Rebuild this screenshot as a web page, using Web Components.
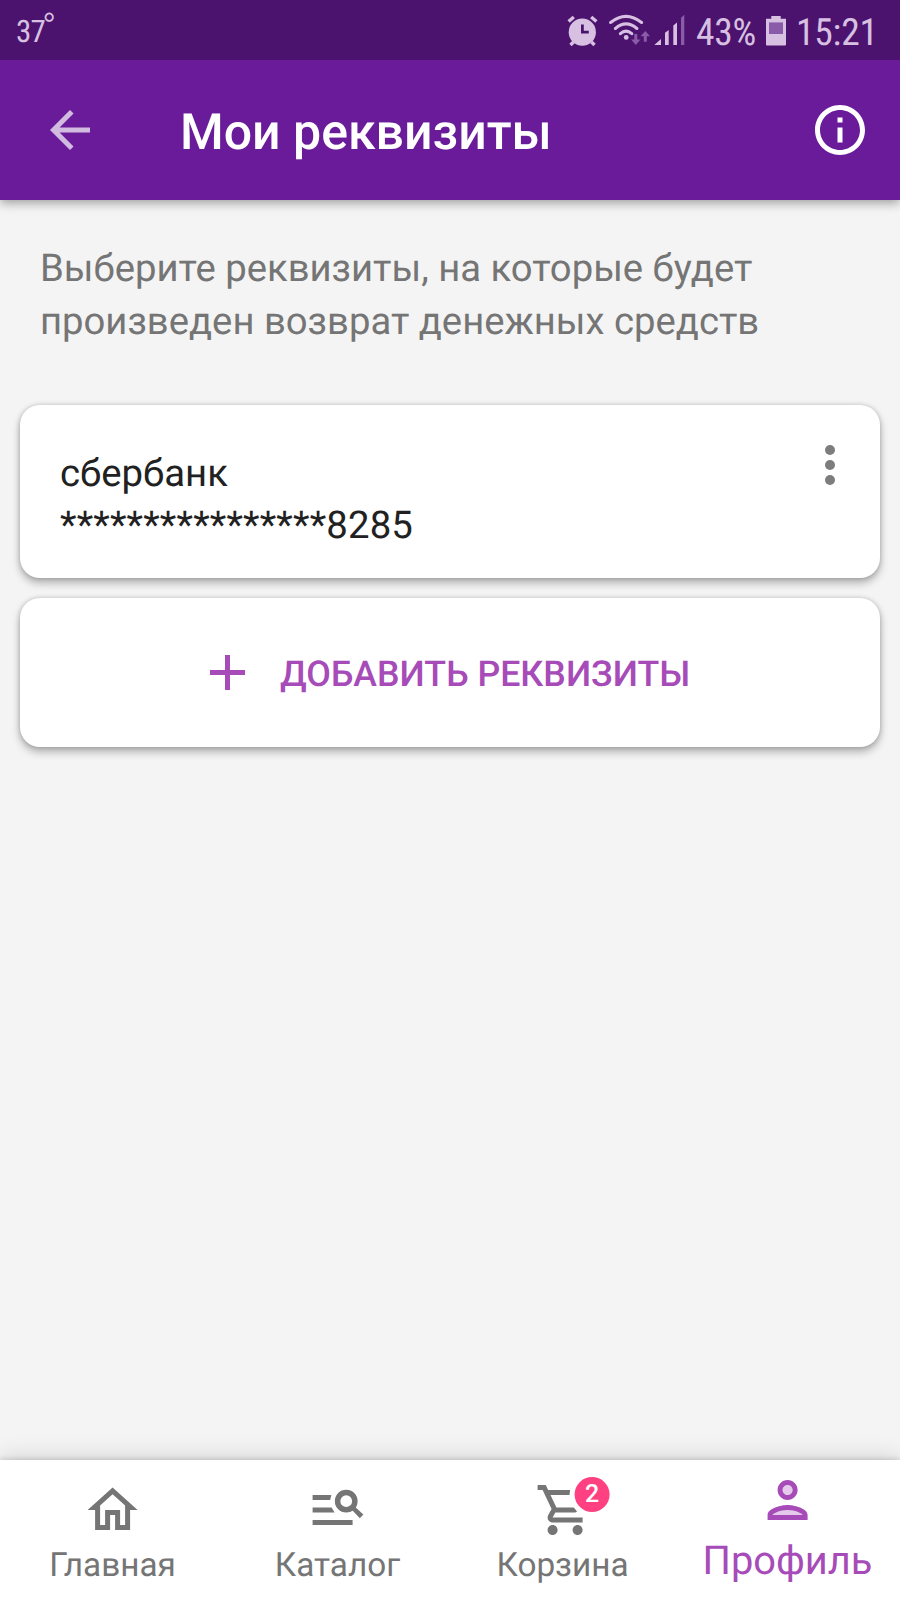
<!DOCTYPE html>
<html lang="ru">
<head>
<meta charset="utf-8">
<title>Мои реквизиты</title>
<style>
  html, body { margin: 0; height: 100%; }
  body { font-family: Roboto, "Noto Sans", sans-serif; background: #f4f4f4; overflow: hidden; text-rendering: geometricPrecision; }
</style>
</head>
<body>
<app-screen>
  <status-bar slot="top" temp="37" battery="43%" time="15:21"></status-bar>
  <app-bar slot="top">Мои реквизиты</app-bar>
  <hint-text>Выберите реквизиты, на которые будет произведен возврат денежных средств</hint-text>
  <app-card>
    <account-row name="сбербанк" number="****************8285"></account-row>
  </app-card>
  <app-card>
    <add-button>ДОБАВИТЬ РЕКВИЗИТЫ</add-button>
  </app-card>
  <nav-bar slot="bottom">
    <nav-item icon="home">Главная</nav-item>
    <nav-item icon="catalog">Каталог</nav-item>
    <nav-item icon="cart" badge="2">Корзина</nav-item>
    <nav-item icon="person" active>Профиль</nav-item>
  </nav-bar>
</app-screen>

<script>
const icons = {
  back: '<path d="M20 11H7.83l5.59-5.59L12 4l-8 8 8 8 1.41-1.41L7.83 13H20z"/>',
  info: '<path d="M11 7h2v2h-2zm0 4h2v6h-2zm1-9C6.48 2 2 6.48 2 12s4.48 10 10 10 10-4.48 10-10S17.52 2 12 2zm0 18c-4.41 0-8-3.59-8-8s3.59-8 8-8 8 3.59 8 8-3.59 8-8 8z"/>',
  more: '<circle cx="12" cy="6" r="2"/><circle cx="12" cy="12" r="2"/><circle cx="12" cy="18" r="2"/>',
  plus: '<path d="M19 13h-6v6h-2v-6H5v-2h6V5h2v6h6z"/>',
  home: '<path d="M12 5.69l5 4.5V18h-2v-6H9v6H7v-7.81l5-4.5M12 3L2 12h3v8h6v-6h2v6h6v-8h3L12 3z"/>',
  catalog: '<path d="M2 6h7.5l-.5 2H2zM2 11h7.6l1.2 2H2zM2 16h16v2H2z"/><circle cx="15.45" cy="8.45" r="3.45" fill="none" stroke="currentColor" stroke-width="2.2"/><path d="M17.4 11.6l1.2-1.2 3.7 3.4-1.4 1.5z"/>',
  cart: '<path transform="translate(1 0)" d="M15.55 13c.75 0 1.41-.41 1.75-1.03l3.58-6.49C21.25 4.82 20.76 4 20.01 4H5.21l-.94-2H1v2h2l3.6 7.59-1.35 2.44C4.52 15.37 5.48 17 7 17h12v-2H7l1.1-2h7.45zM6.16 6h12.15l-2.76 5H8.53L6.16 6zM7 18c-1.1 0-1.99.9-1.99 2S5.9 22 7 22s2-.9 2-2-.9-2-2-2zm10 0c-1.1 0-1.99.9-1.99 2s.89 2 1.99 2 2-.9 2-2-.9-2-2-2z"/>',
  person: '<path opacity=".3" d="M12 16c-2.69 0-5.77 1.28-6 2h12c-.2-.71-3.3-2-6-2z"/><circle opacity=".3" cx="12" cy="8" r="2"/><path d="M12 14c-2.67 0-8 1.34-8 4v2h16v-2c0-2.66-5.33-4-8-4zm-6 4c.22-.72 3.31-2 6-2 2.7 0 5.8 1.29 6 2H6zm6-6c2.21 0 4-1.79 4-4s-1.79-4-4-4-4 1.79-4 4 1.79 4 4 4zm0-6c1.1 0 2 .9 2 2s-.9 2-2 2-2-.9-2-2 .9-2 2-2z"/>'
};

class BaseElement extends HTMLElement {
  constructor() {
    super();
    this.attachShadow({ mode: 'open' });
  }
  connectedCallback() {
    this.shadowRoot.innerHTML = `<style>${this.css()}</style>${this.html()}`;
  }
  css() { return ''; }
  html() { return '<slot></slot>'; }
}

class AppIcon extends BaseElement {
  css() {
    return `
      :host { display: block; flex: none; width: 60px; height: 60px; }
      svg { display: block; width: 100%; height: 100%; fill: currentColor; }
    `;
  }
  html() { return `<svg viewBox="0 0 24 24">${icons[this.getAttribute('name')]}</svg>`; }
}

class AppScreen extends BaseElement {
  css() {
    return `
      :host { display: flex; flex-direction: column; height: 100vh; overflow: hidden; }
      header { position: relative; z-index: 1; box-shadow: 0 3px 10px rgba(0,0,0,.36); }
      main { flex: 1; display: flex; flex-direction: column; gap: 20px; padding: 42px 20px 0; }
    `;
  }
  html() {
    return `
      <header><slot name="top"></slot></header>
      <main><slot></slot></main>
      <slot name="bottom"></slot>
    `;
  }
}

class StatusBar extends BaseElement {
  css() {
    return `
      :host {
        display: flex; justify-content: space-between; box-sizing: border-box;
        height: 60px; padding-left: 16px;
        background: #4b136d; color: #d7c0e2;
        font-family: "Roboto Condensed", Roboto, sans-serif;
      }
      span { line-height: 66px; white-space: nowrap; }
      svg { display: block; flex: none; height: 60px; fill: currentColor; }
      .temp { display: flex; font-size: 31px; line-height: 64px; font-weight: 400; letter-spacing: -.8px; }
      .temp sup { font: 300 38px/56px Roboto; margin-left: -3px; }
      .right { display: flex; width: 333px; font-size: 37.5px; }
      .wifi { margin: 0 4px 0 11px; }
      .battery { width: 70px; margin-left: 11px; letter-spacing: -.3px; }
      .cell { margin-right: 10px; }
      .time { letter-spacing: -.2px; }
      .line { fill: none; stroke: currentColor; stroke-width: 3; stroke-linecap: round; }
      .dim { fill: #8a5ba8; }
    `;
  }
  html() {
    return `
      <span class="temp">${this.getAttribute('temp')}<sup>°</sup></span>
      <div class="right">
        <svg width="31" viewBox="0 0 31 60">
          <circle cx="15.3" cy="32.2" r="13.6"/>
          <path d="M1.6 21.5l5.2-4.6M24.2 16.9l5.2 4.6M6.5 42l-3 3M24.5 42l3 3" fill="none" stroke="currentColor" stroke-width="3.4"/>
          <path d="M15.4 24.5v7.7h6.4" fill="none" stroke="#4b136d" stroke-width="2.8"/>
        </svg>
        <svg class="wifi" width="41" viewBox="0 0 41 60">
          <path class="line" d="M1.6 22.5Q17 10.2 32.6 22.5M6.4 28.5Q17 19.3 27.9 28.5M11.4 33.7Q17 28.6 22.8 33.7"/>
          <circle cx="17.2" cy="37.4" r="2.4"/>
          <path class="dim" d="M25.3 34h3v5.5h3.2L26.8 45l-4.7-5.5h3.2zM34.8 41.7h3v-5.4H41L36.3 31l-4.7 5.3h3.2z"/>
        </svg>
        <svg width="31" viewBox="0 0 31 60">
          <path d="M.3 45L7 39v6zM11 45V32.8l3.7-2.8v15zM19.3 45V25.4l3.7-3V45z"/>
          <path class="dim" d="M27 45V17.7l3.3-2.9V45z"/>
        </svg>
        <span class="battery">${this.getAttribute('battery')}</span>
        <svg class="cell" width="20" viewBox="0 0 20 60">
          <path d="M5.3 16h9.4v2.8H20v25.7q0 1-1 1H1q-1 0-1-1V18.8h5.3z"/>
          <path class="dim" d="M3 22.4h14V34H3z"/>
        </svg>
        <span class="time">${this.getAttribute('time')}</span>
      </div>
    `;
  }
}

class AppBar extends BaseElement {
  css() {
    return `
      :host {
        display: flex; align-items: center; box-sizing: border-box;
        height: 140px; padding: 0 30px 0 40px;
        background: #6a1b9a; color: #fff;
      }
      h1 { flex: 1; margin: 6px 0 0 80px; font-size: 50px; font-weight: 500; line-height: 60px; }
      .back { opacity: .7; }
    `;
  }
  html() {
    return `
      <app-icon class="back" name="back"></app-icon>
      <h1><slot></slot></h1>
      <app-icon name="info"></app-icon>
    `;
  }
}

class HintText extends BaseElement {
  css() {
    return `
      :host {
        display: block; box-sizing: border-box; height: 143px; padding: 1px 20px 0;
        font-size: 38.25px; line-height: 53px; color: #757575;
      }
    `;
  }
}

class AppCard extends BaseElement {
  css() {
    return `
      :host {
        display: block; background: #fff; border-radius: 20px;
        box-shadow: 0 5px 9px rgba(0,0,0,.28), 0 0 5px rgba(0,0,0,.18);
      }
    `;
  }
}

class AccountRow extends BaseElement {
  css() {
    return `
      :host {
        display: flex; justify-content: space-between; box-sizing: border-box;
        height: 173px; padding: 30px 20px 0 40px;
      }
      .text { padding-top: 13px; font-size: 38.3px; line-height: 51.5px; color: #212121; }
      .number { letter-spacing: .15px; }
      app-icon { color: #7d7d7d; }
    `;
  }
  html() {
    return `
      <div class="text">
        <div>${this.getAttribute('name')}</div>
        <div class="number">${this.getAttribute('number')}</div>
      </div>
      <app-icon name="more"></app-icon>
    `;
  }
}

class AddButton extends BaseElement {
  css() {
    return `
      :host {
        display: flex; align-items: center; gap: 22.5px;
        height: 148.5px; padding-left: 177.5px;
        color: #a64bb8; font-size: 35.7px; font-weight: 500;
      }
      app-icon { transform: translate(-.5px, .5px); }
      span { padding-top: 4px; }
    `;
  }
  html() { return '<app-icon name="plus"></app-icon><span><slot></slot></span>'; }
}

class NavBar extends BaseElement {
  css() {
    return `
      :host {
        display: flex; height: 140px; background: #fff;
        box-shadow: 0 0 6px rgba(0,0,0,.2), 0 -3px 22px rgba(0,0,0,.13);
      }
    `;
  }
}

class NavItem extends BaseElement {
  css() {
    return `
      :host {
        flex: 1; display: flex; flex-direction: column; align-items: center;
        box-sizing: border-box; padding-top: 20px;
        font-size: 33.3px; line-height: 51px; color: #757575;
      }
      :host([active]) { padding-top: 10px; font-size: 39.8px; line-height: 62px; color: #a64bb8; }
      .icon { position: relative; transform: translateX(-.4px); }
      .badge {
        position: absolute; left: 42.6px; top: -2.7px; width: 35px; height: 35px;
        border-radius: 50%; background: #ff4081; color: #fff; box-shadow: 0 0 0 5px #fff;
        font-size: 25px; font-weight: 500; line-height: 36px; text-align: center;
      }
    `;
  }
  html() {
    const badge = this.getAttribute('badge');
    return `
      <div class="icon">
        <app-icon name="${this.getAttribute('icon')}"></app-icon>
        ${badge ? `<span class="badge">${badge}</span>` : ''}
      </div>
      <slot></slot>
    `;
  }
}

customElements.define('app-icon', AppIcon);
customElements.define('app-screen', AppScreen);
customElements.define('status-bar', StatusBar);
customElements.define('app-bar', AppBar);
customElements.define('hint-text', HintText);
customElements.define('app-card', AppCard);
customElements.define('account-row', AccountRow);
customElements.define('add-button', AddButton);
customElements.define('nav-bar', NavBar);
customElements.define('nav-item', NavItem);
</script>
</body>
</html>
